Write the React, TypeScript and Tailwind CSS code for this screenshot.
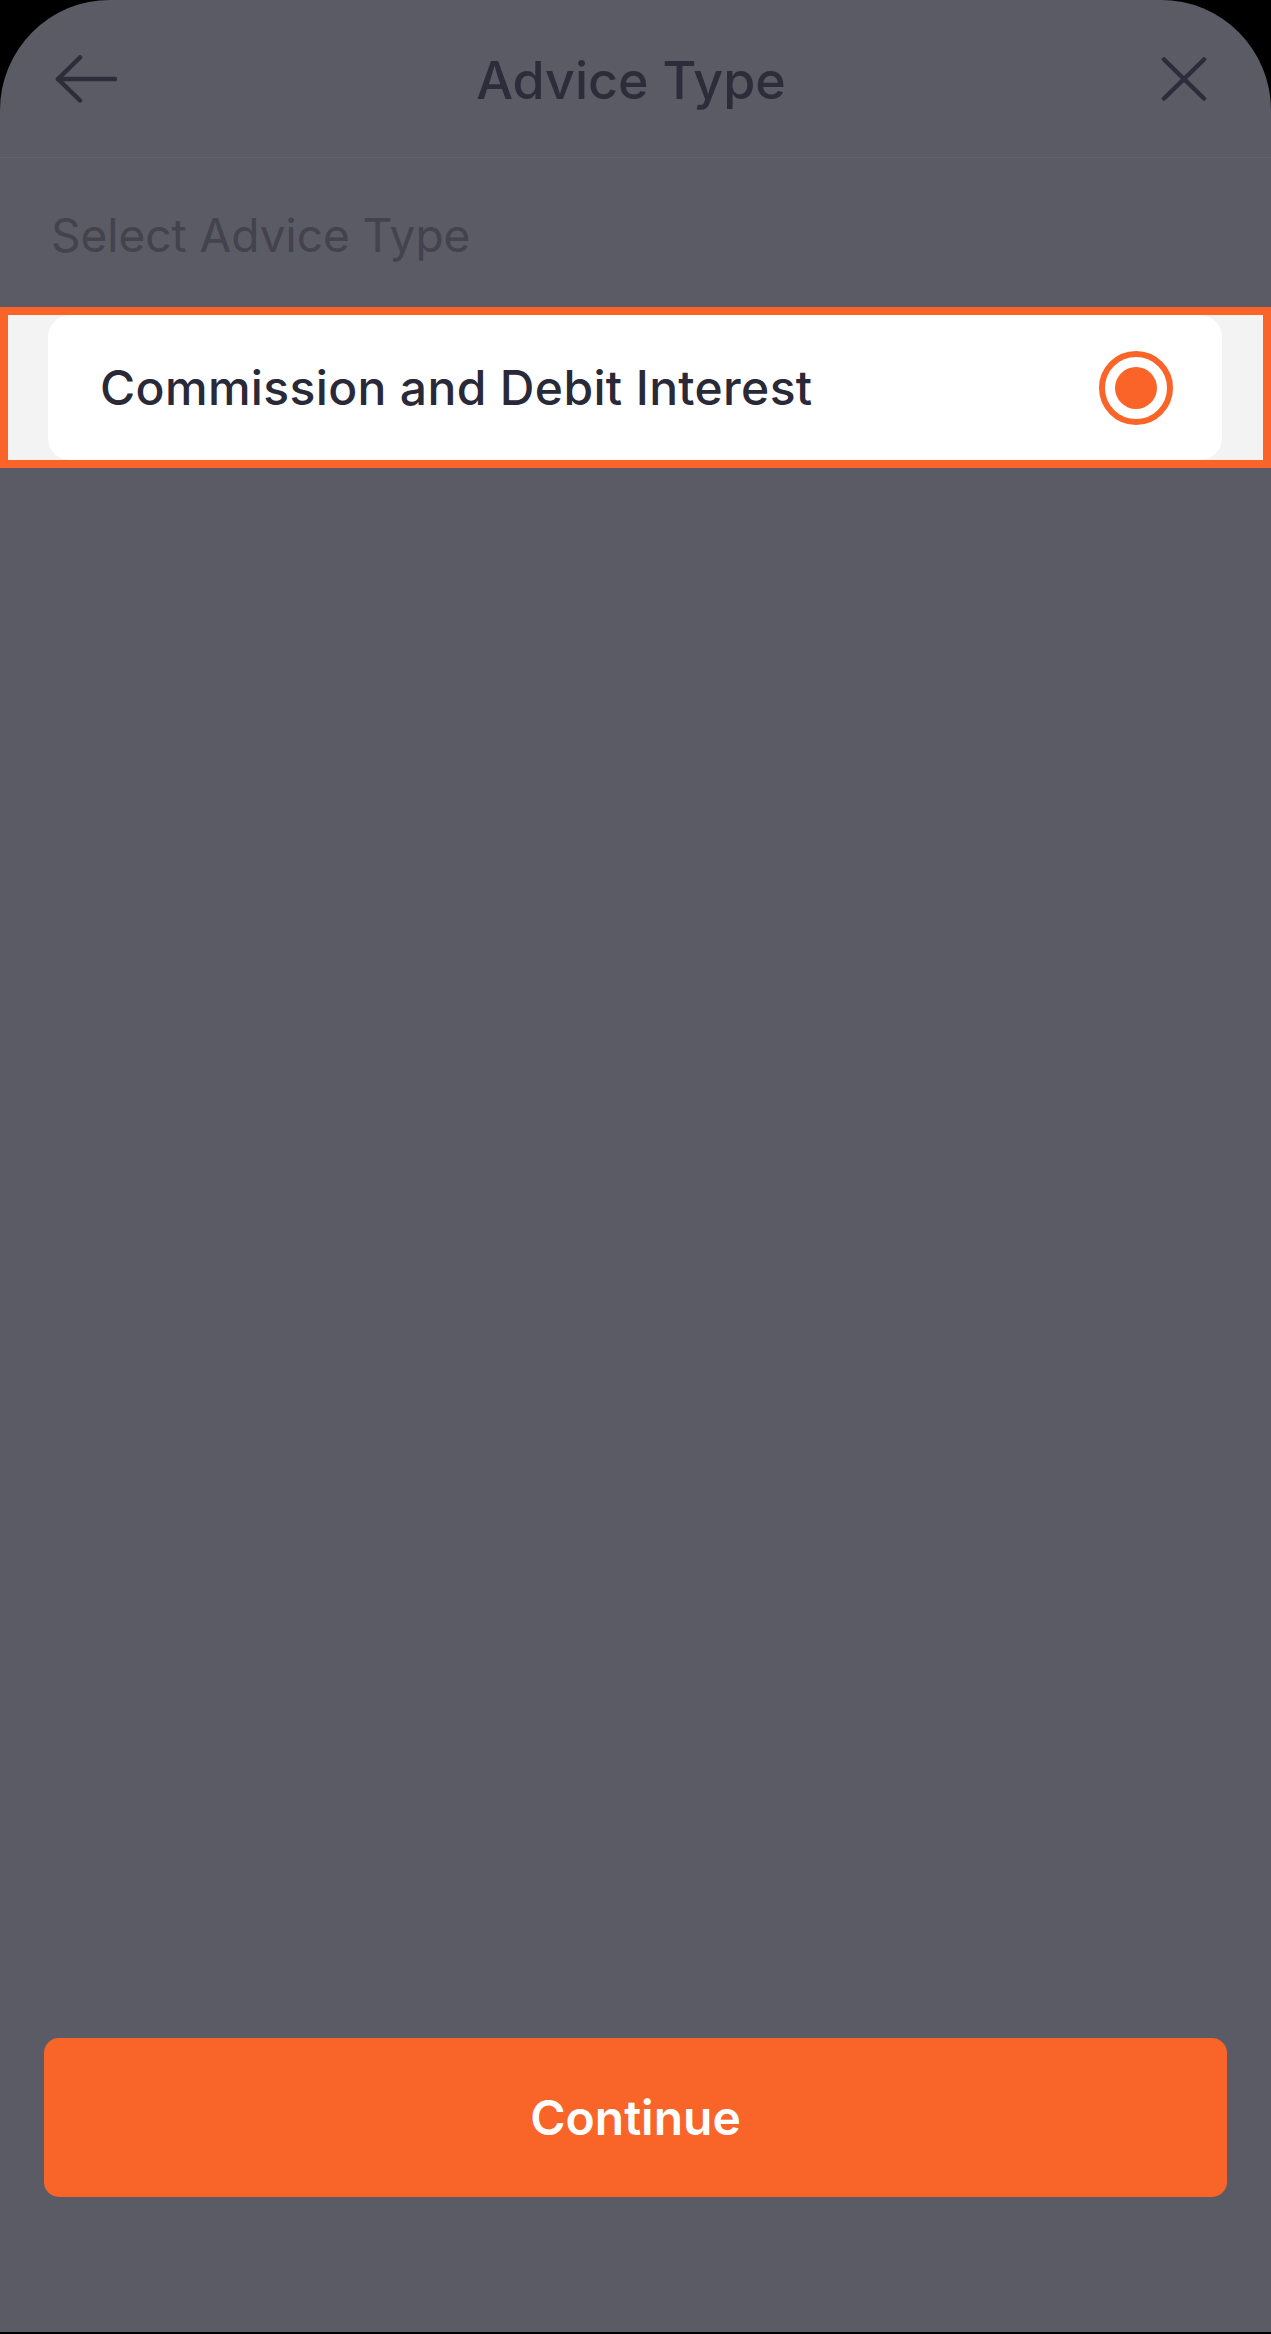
export default function App() {
  return (
    <div className="w-[1271px] h-[2334px] bg-black font-['Inter',sans-serif]">
      <div className="h-[2332px] rounded-t-[110px] bg-[#5b5b65] flex flex-col">
        {/* header */}
        <div className="h-[158px] border-b border-[#62626c] grid grid-cols-[1fr_auto_1fr] items-center pl-[55px] pr-[64px]">
          <svg width="62" height="48" viewBox="0 0 62 48" fill="none" stroke="#2d2c3b" strokeWidth="4.5" strokeLinecap="round" strokeLinejoin="round">
            <path d="M60 24H3" />
            <path d="M25 2.5L3 24l22 21.5" />
          </svg>
          <h1 className="text-[52px] leading-none font-medium text-[#2d2c3b] pt-[4px]">Advice Type</h1>
          <div className="justify-self-end">
            <svg width="46" height="44" viewBox="0 0 46 44" fill="none" stroke="#2d2c3b" strokeWidth="4.5" strokeLinecap="round">
              <path d="M3 2.5l40 39" />
              <path d="M43 2.5l-40 39" />
            </svg>
          </div>
        </div>

        <div className="h-[149px] flex items-center pl-[51px] pt-[4px]">
          <p className="text-[46px] leading-none text-[#43424d]">Select Advice Type</p>
        </div>

        {/* selected option */}
        <div className="h-[161px] border-[8px] border-[#fa6428] bg-[#f3f3f4] pl-[40px] pr-[41px]">
          <div className="h-full bg-white rounded-[22px] flex items-center justify-between pl-[52px] pr-[49px]">
            <span className="text-[48px] leading-none font-medium tracking-[0.35px] text-[#2a2937]">Commission and Debit Interest</span>
            <div className="w-[74px] h-[74px] rounded-full border-[6px] border-[#fa6428] flex items-center justify-center">
              <div className="w-[42px] h-[42px] rounded-full bg-[#fa6428]" />
            </div>
          </div>
        </div>

        <div className="flex-1" />

        <div className="px-[44px] pb-[135px]">
          <button className="w-full h-[159px] rounded-[15px] bg-[#f96429] text-white text-[48px] font-semibold leading-none">
            Continue
          </button>
        </div>
      </div>
    </div>
  )
}
